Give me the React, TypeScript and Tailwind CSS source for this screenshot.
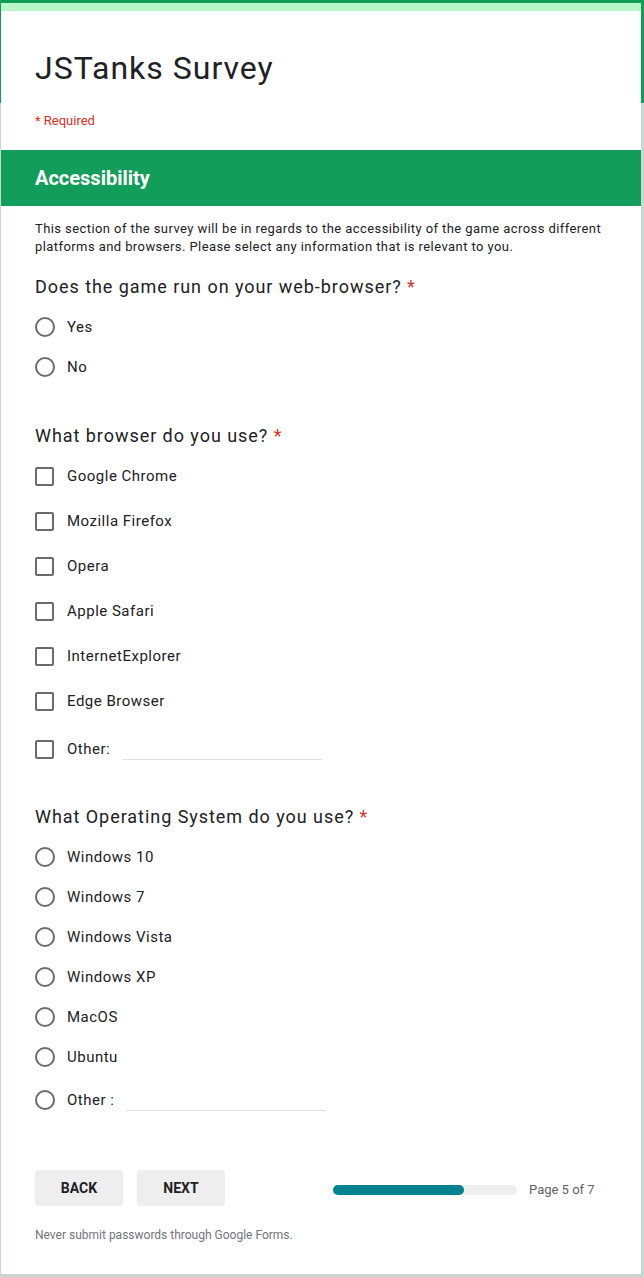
const browsers = ["Google Chrome", "Mozilla Firefox", "Opera", "Apple Safari", "InternetExplorer", "Edge Browser"];
const systems = ["Windows 10", "Windows 7", "Windows Vista", "Windows XP", "MacOS", "Ubuntu"];

function Radio() {
    return <span className="inline-block w-[20px] h-[20px] rounded-full border-2 border-[#6b6b6b] shrink-0" />;
}

function Check() {
    return <span className="inline-block w-[19px] h-[19px] rounded-[2px] border-2 border-[#6b6b6b] shrink-0" />;
}

function Question({ text }: { text: string }) {
    return (
        <div className="text-[18px] leading-[24px] tracking-[0.95px] text-[#202124]">
            {text} <span className="text-[#d93025]">*</span>
        </div>
    );
}

export default function App() {
    return (
        <div
            className="min-h-[1277px] pt-[3px] pb-[3px] bg-[linear-gradient(#109d58_0_103px,#c7d8d2_103px)]"
            style={{ fontFamily: "Roboto, 'Liberation Sans', sans-serif" }}
        >
            <div className="ml-[1px] w-[640px] bg-white">
                <div className="h-[8px] bg-[#b9f6ca]" />
                <div className="px-[34px] pt-[37px]">
                    <h1 className="text-[32px] leading-[40px] tracking-[1px] text-[#202124] font-normal">JSTanks Survey</h1>
                    <div className="mt-[24px] text-[13px] leading-[18px] text-[#d93025]">* Required</div>
                </div>
                <div className="mt-[20px] h-[56px] bg-[#129e5a] px-[34px] flex items-center">
                    <span className="text-white text-[20px] font-bold">Accessibility</span>
                </div>

                <div className="px-[34px]">
                    <p className="pt-[14px] text-[13px] leading-[18px] tracking-[0.42px] text-[#202124]">
                        This section of the survey will be in regards to the accessibility of the game across different platforms and browsers. Please select any information that is relevant to you.
                    </p>

                    <div className="mt-[19px]">
                        <Question text="Does the game run on your web-browser?" />
                        <div className="mt-[8px]">
                            {["Yes", "No"].map((o) => (
                                <div key={o} className="h-[40px] flex items-center gap-[12px] text-[15px] tracking-[0.5px] text-[#202124]">
                                    <Radio />
                                    <span>{o}</span>
                                </div>
                            ))}
                        </div>
                    </div>

                    <div className="mt-[37px]">
                        <Question text="What browser do you use?" />
                        <div className="mt-[6px]">
                            {browsers.map((o) => (
                                <div key={o} className="h-[45px] flex items-center gap-[13px] text-[15px] tracking-[0.5px] text-[#202124]">
                                    <Check />
                                    <span>{o}</span>
                                </div>
                            ))}
                            <div className="h-[51px] flex items-center gap-[13px] text-[15px] tracking-[0.5px] text-[#202124]">
                                <Check />
                                <span>Other:</span>
                                <span className="ml-[-1px] mt-[20px] w-[200px] h-[1px] bg-[#e0e0e0]" />
                            </div>
                        </div>
                    </div>

                    <div className="mt-[30px]">
                        <Question text="What Operating System do you use?" />
                        <div className="mt-[8px]">
                            {systems.map((o) => (
                                <div key={o} className="h-[40px] flex items-center gap-[12px] text-[15px] tracking-[0.5px] text-[#202124]">
                                    <Radio />
                                    <span>{o}</span>
                                </div>
                            ))}
                            <div className="h-[46px] flex items-center gap-[12px] text-[15px] tracking-[0.5px] text-[#202124]">
                                <Radio />
                                <span>Other :</span>
                                <span className="mt-[20px] w-[200px] h-[1px] bg-[#e0e0e0]" />
                            </div>
                        </div>
                    </div>

                    <div className="mt-[47px] flex items-center">
                        <button className="w-[88px] h-[36px] rounded-[3px] bg-[#eeeeee] text-[14px] font-bold text-[#202124]">BACK</button>
                        <button className="ml-[14px] w-[88px] h-[36px] rounded-[3px] bg-[#eeeeee] text-[14px] font-bold text-[#202124]">NEXT</button>
                        <div className="ml-[108px] mt-[4px] w-[184px] h-[10px] rounded-full bg-[#eeeeee]">
                            <div className="w-[131px] h-[10px] rounded-full bg-[#00838f]" />
                        </div>
                        <span className="ml-[12px] mt-[4px] text-[13px] text-[#5f6368]">Page 5 of 7</span>
                    </div>

                    <div className="mt-[21px] pb-[31px] text-[12px] leading-[16px] text-[#70757a]">
                        Never submit passwords through Google Forms.
                    </div>
                </div>
            </div>
        </div>
    );
}
